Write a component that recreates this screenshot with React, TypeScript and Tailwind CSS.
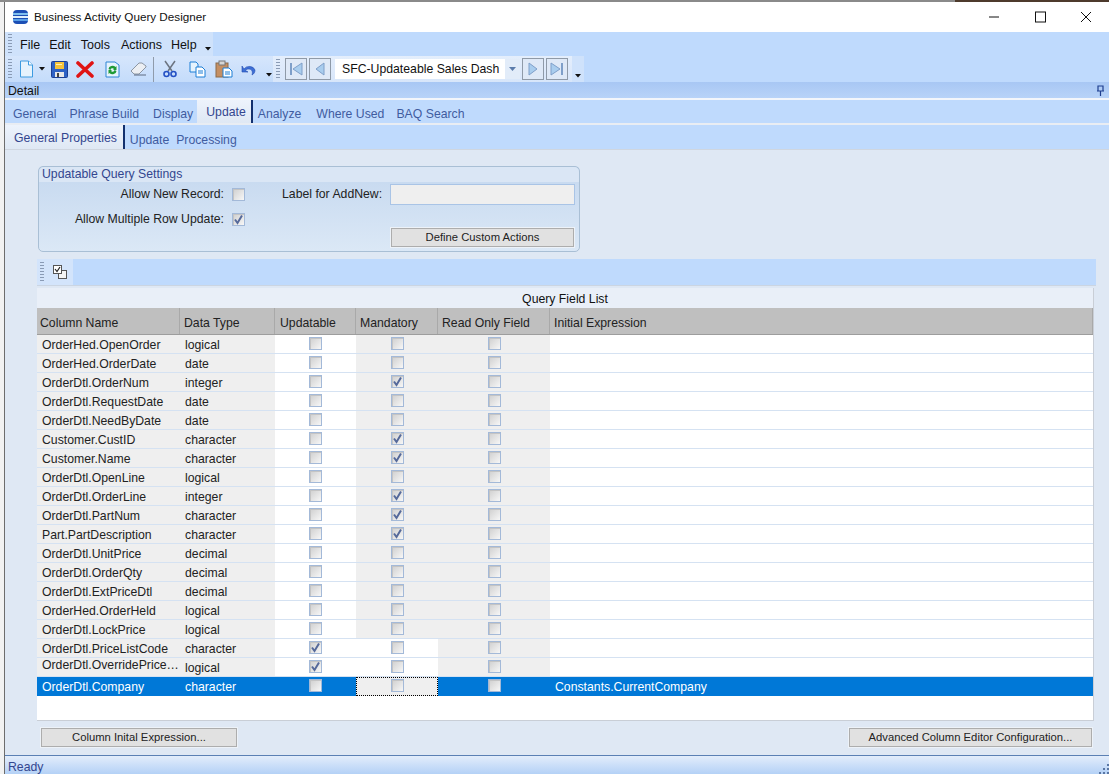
import React from "react";

const rows: [string, string, number, number][] = [
  ["OrderHed.OpenOrder", "logical", 0, 0],
  ["OrderHed.OrderDate", "date", 0, 0],
  ["OrderDtl.OrderNum", "integer", 0, 1],
  ["OrderDtl.RequestDate", "date", 0, 0],
  ["OrderDtl.NeedByDate", "date", 0, 0],
  ["Customer.CustID", "character", 0, 1],
  ["Customer.Name", "character", 0, 1],
  ["OrderDtl.OpenLine", "logical", 0, 0],
  ["OrderDtl.OrderLine", "integer", 0, 1],
  ["OrderDtl.PartNum", "character", 0, 1],
  ["Part.PartDescription", "character", 0, 1],
  ["OrderDtl.UnitPrice", "decimal", 0, 0],
  ["OrderDtl.OrderQty", "decimal", 0, 0],
  ["OrderDtl.ExtPriceDtl", "decimal", 0, 0],
  ["OrderHed.OrderHeld", "logical", 0, 0],
  ["OrderDtl.LockPrice", "logical", 0, 0],
  ["OrderDtl.PriceListCode", "character", 1, 0],
  ["OrderDtl.OverridePrice…", "logical", 1, 0],
];

const Check = ({ on }: { on?: boolean | number }) => (
  <span className="flex h-[13px] w-[13px] shrink-0 items-center justify-center border border-[#a3b9d8] bg-gradient-to-br from-[#cfcfcf] to-[#f7f7f7] shadow-[inset_1px_1px_0_#c4c4c4]">
    {on ? (
      <svg width="11" height="11" viewBox="0 0 11 11">
        <path d="M2 5.500l2.500 3.500L9 1.500" fill="none" stroke="#55699a" strokeWidth="2" />
      </svg>
    ) : null}
  </span>
);

const Grip = () => (
  <span className="mx-[3px] h-[20px] w-[4px] bg-[repeating-linear-gradient(to_bottom,#8a9bb5_0,#8a9bb5_1px,transparent_1px,transparent_3px)]" />
);

const Overflow = ({ className = "" }: { className?: string }) => (
  <svg width="6" height="4" viewBox="0 0 6 4" className={className}>
    <path d="M0 0h6L3 3.500z" fill="#111" />
  </svg>
);

const Logo = () => (
  <svg width="17" height="16" viewBox="0 0 17 16">
    <rect x="1" y="1" width="15" height="14" rx="4" fill="#1c4fb5" />
    <rect x="1" y="4" width="15" height="2" fill="#7fc0ee" />
    <rect x="1" y="7" width="15" height="2" fill="#dff0fb" />
    <rect x="1" y="10" width="15" height="2" fill="#5aa0e6" />
  </svg>
);

const NavBtn = ({ type }: { type: "first" | "prev" | "next" | "last" }) => (
  <button className="flex h-[22px] w-[22px] items-center justify-center border border-[#8f9aa8] bg-[#dfe9f7]">
    <svg width="16" height="14" viewBox="0 0 16 14">
      {type === "first" && (
        <>
          <rect x="2" y="1" width="2" height="12" fill="#7f9fc9" />
          <path d="M14 1v12L5 7z" fill="#a9cdee" stroke="#7f9fc9" />
        </>
      )}
      {type === "prev" && <path d="M12 1v12L4 7z" fill="#a9cdee" stroke="#7f9fc9" />}
      {type === "next" && <path d="M4 1v12l8-6z" fill="#a9cdee" stroke="#7f9fc9" />}
      {type === "last" && (
        <>
          <rect x="12" y="1" width="2" height="12" fill="#7f9fc9" />
          <path d="M2 1v12l9-6z" fill="#a9cdee" stroke="#7f9fc9" />
        </>
      )}
    </svg>
  </button>
);

const Tools = () => (
  <>
    <svg width="15" height="18" viewBox="0 0 15 18" className="ml-[4px]">
      <path d="M1.500 1h8l4 4v12h-12z" fill="#e6f3fd" stroke="#3d9be0" />
      <path d="M9.500 1v4h4" fill="#fff" stroke="#3d9be0" />
    </svg>
    <Overflow className="ml-[5px]" />
    <svg width="17" height="17" viewBox="0 0 17 17" className="ml-[6px]">
      <rect x="0.500" y="0.500" width="16" height="16" rx="1" fill="#2f62c4" stroke="#1c3f93" />
      <rect x="4" y="1" width="9" height="7" fill="#f5c33b" />
      <rect x="5" y="3" width="6" height="1" fill="#fff2b5" />
      <rect x="4" y="11" width="9" height="5" fill="#e8e8e8" />
      <rect x="6" y="12" width="2" height="4" fill="#444" />
    </svg>
    <svg width="18" height="17" viewBox="0 0 18 17" className="ml-[8px]">
      <path d="M2 2l14 13M16 2L2 15" stroke="#e01414" strokeWidth="3.600" strokeLinecap="round" />
    </svg>
    <svg width="15" height="17" viewBox="0 0 15 17" className="ml-[11px]">
      <path d="M1 1h9l4 3v12H1z" fill="#e6f3fd" stroke="#2f86d6" />
      <path d="M3.500 8a4 3.500 0 0 1 7-2l1-1v4H8l1-1a2 2 0 0 0-3.500 1zM11.500 10a4 3.500 0 0 1-7 2l-1 1V9H7l-1 1a2 2 0 0 0 3.500-1z" fill="#1f9a35" />
    </svg>
    <svg width="17" height="14" viewBox="0 0 17 14" className="ml-[10px]">
      <path d="M1 9l8-8h3l4 3v1l-7 7H4z" fill="#eceff3" stroke="#8c96a3" />
      <path d="M4 13h12" stroke="#5c6a80" />
    </svg>
    <span className="ml-[6px] h-[25px] w-px bg-[#8f9bab]" />
    <svg width="14" height="18" viewBox="0 0 14 18" className="ml-[9px]">
      <path d="M2 1l7 10M12 1L5 11" stroke="#6c7480" strokeWidth="1.500" />
      <circle cx="3.500" cy="14" r="2.500" fill="none" stroke="#2451c4" strokeWidth="1.600" />
      <circle cx="10.500" cy="14" r="2.500" fill="none" stroke="#2451c4" strokeWidth="1.600" />
    </svg>
    <svg width="17" height="17" viewBox="0 0 17 17" className="ml-[12px]">
      <path d="M1 1h6l2 2v8H1z" fill="#e6f3fd" stroke="#1d7fd6" />
      <path d="M7 6h6l3 3v7H7z" fill="#fff" stroke="#1d7fd6" />
      <path d="M9 10h5M9 12h5" stroke="#1d7fd6" />
    </svg>
    <svg width="18" height="18" viewBox="0 0 18 18" className="ml-[9px]">
      <rect x="1" y="3" width="12" height="14" fill="#c58f63" stroke="#8a6a4a" />
      <rect x="4" y="1" width="6" height="4" fill="#d6d6d6" stroke="#777" />
      <path d="M8 8h6l3 3v6H8z" fill="#fff" stroke="#1d7fd6" />
      <path d="M10 12h5M10 14h5" stroke="#1d7fd6" />
    </svg>
    <svg width="16" height="13" viewBox="0 0 16 13" className="ml-[8px]">
      <path d="M3 6a6 5 0 0 1 11 1c0 2-1 4-3 5 1-3 0-6-3-6-2 0-3 .5-3.500 1.500L7 9H1V3z" fill="#3d6fd6" stroke="#234bb0" strokeWidth="0.600" />
    </svg>
    <Overflow className="ml-[9px] mt-[12px]" />
  </>
);

const Btn = ({ text, className }: { text: string; className: string }) => (
  <button className={`flex h-[19px] items-center justify-center border border-[#adadad] bg-[#e1e1e1] text-[11.25px] text-[#222] outline outline-1 outline-[#edf2f8] ${className}`}>
    {text}
  </button>
);

const Row = ({ r }: { r: [string, string, number, number] }) => {
  const late = r[2] === 1;
  return (
    <div className="flex h-[19px] border-b border-[#d5e2f2] text-[#222]">
      <span className={`flex w-[143px] items-center bg-[#efefef] pl-[5px] ${r[0].endsWith("…") ? "pb-[4px]" : "pt-[2px]"}`}>{r[0]}</span>
      <span className="flex w-[95px] items-center bg-[#efefef] pl-[5px] pt-[2px]">{r[1]}</span>
      <span className="flex w-[81px] justify-center bg-white pt-[2px]"><Check on={r[2]} /></span>
      <span className={`flex w-[82px] justify-center pt-[2px] ${late ? "bg-white" : "bg-[#efefef]"}`}><Check on={r[3]} /></span>
      <span className="flex w-[112px] justify-center bg-[#efefef] pt-[2px]"><Check /></span>
      <span className="flex-1 bg-white" />
    </div>
  );
};

export default function App() {
  const head: [string, string][] = [
    ["Column Name", "w-[143px] pl-[3px]"],
    ["Data Type", "w-[95px] pl-[4px]"],
    ["Updatable", "w-[81px] pl-[5px]"],
    ["Mandatory", "w-[82px] pl-[4px]"],
    ["Read Only Field", "w-[112px] pl-[4px]"],
    ["Initial Expression", "flex-1 pl-[4px]"],
  ];
  return (
    <div className="flex h-[774px] w-[1109px] flex-col overflow-hidden bg-[#f2f2f2] font-['Liberation_Sans',sans-serif] text-[12.25px] text-[#222]">
      <div className="flex h-[2px] shrink-0">
        <div className="flex-1 bg-[#8a8a8a]" />
        <div className="w-[154px] bg-[#4d3a2c]" />
      </div>
      <div className="flex min-h-0 flex-1 pl-[4px]">
        <div className="flex min-w-0 flex-1 flex-col border-l border-[#6d6d6d]">
          {/* title bar */}
          <div className="flex h-[30px] shrink-0 items-center bg-white">
            <span className="ml-[7px]"><Logo /></span>
            <span className="ml-[5px] text-[11.7px] text-[#111]">Business Activity Query Designer</span>
            <div className="ml-auto flex items-center">
              <svg width="46" height="12" viewBox="0 0 46 12"><path d="M18 6h10" stroke="#111" /></svg>
              <svg width="46" height="12" viewBox="0 0 46 12"><rect x="18.500" y="1" width="10" height="10" fill="none" stroke="#111" /></svg>
              <svg width="46" height="12" viewBox="0 0 46 12"><path d="M18 1l10 10M28 1L18 11" stroke="#111" /></svg>
            </div>
          </div>
          {/* menu + toolbars */}
          <div className="h-[50px] shrink-0 bg-[#bfdafd]">
            <div className="flex h-[24px] w-[208px] items-center bg-[#cfe2fb]">
              <Grip />
              <nav className="flex pt-[3px] text-[12.5px] text-[#111]">
                <span className="ml-[5px]">File</span>
                <span className="ml-[9px]">Edit</span>
                <span className="ml-[10px]">Tools</span>
                <span className="ml-[11px]">Actions</span>
                <span className="ml-[9px]">Help</span>
              </nav>
              <Overflow className="ml-[8px] mt-[10px]" />
            </div>
            <div className="flex h-[26px] items-center">
              <div className="flex h-full w-[268px] items-center bg-gradient-to-b from-[#d6e6fc] to-[#c4dcfb]">
                <Grip />
                <Tools />
              </div>
              <div className="flex h-full w-[299px] items-center bg-gradient-to-b from-[#e4eefc] to-[#d8e6fa]">
                <Grip />
                <span className="ml-[2px] flex items-center gap-[2px]">
                  <NavBtn type="first" />
                  <NavBtn type="prev" />
                </span>
                <span className="ml-[4px] mr-[2px] flex h-[20px] w-[185px] items-center bg-white pl-[7px] text-[#111]">
                  SFC-Updateable Sales Dash
                  <span className="ml-auto flex h-full w-[15px] items-center justify-center bg-[#e2ecf9]">
                    <svg width="7" height="4" viewBox="0 0 7 4"><path d="M0 0h7L3.500 4z" fill="#5b7cab" /></svg>
                  </span>
                </span>
                <span className="flex items-center gap-[2px]">
                  <NavBtn type="next" />
                  <NavBtn type="last" />
                </span>
              </div>
              <div className="flex h-full w-[12px] items-end justify-center bg-[#cfe2fb] pb-[4px]">
                <Overflow />
              </div>
            </div>
          </div>
          {/* detail header */}
          <div className="flex h-[16px] shrink-0 items-center justify-between bg-gradient-to-b from-[#a8c7f4] to-[#b8d3f8] pl-[3px] pr-[4px] text-[#111]">
            <span className="pt-[2px]">Detail</span>
            <svg width="9" height="11" viewBox="0 0 9 11">
              <path d="M2 1h5v5H2zM1 6h7M4.500 6v5" fill="none" stroke="#1f3f8f" strokeWidth="1.200" />
            </svg>
          </div>
          <div className="h-[2px] shrink-0 bg-[#f3f6fb]" />
          {/* tabs */}
          <div className="flex h-[23px] shrink-0 items-center bg-[#bfdafd] text-[#3f5c9f]">
            <span className="ml-[8px] pt-[5px]">General</span>
            <span className="ml-[13px] pt-[5px]">Phrase Build</span>
            <span className="ml-[14px] pt-[5px]">Display</span>
            <span className="ml-[4px] h-full border-r-2 border-[#12306e] bg-gradient-to-b from-[#edf3fc] to-[#dfe8f4] pl-[9px] pr-[5px] pt-[3px] text-[#33468f]">Update</span>
            <span className="ml-[5px] pt-[5px]">Analyze</span>
            <span className="ml-[15px] pt-[5px]">Where Used</span>
            <span className="ml-[12px] pt-[5px]">BAQ Search</span>
          </div>
          <div className="h-[2px] shrink-0 bg-[#e9edf3]" />
          <div className="flex h-[25px] shrink-0 items-center border-b border-[#cfd6e0] bg-[#bfdafd] text-[#3f5c9f]">
            <span className="h-full border-r-2 border-[#12306e] bg-gradient-to-b from-[#edf3fc] to-[#dfe8f4] pl-[9px] pr-[6px] pt-[4px] text-[#33468f]">General Properties</span>
            <span className="ml-[5px] whitespace-pre pt-[6px]">Update  Processing</span>
          </div>
          {/* body */}
          <div className="flex min-h-0 flex-1 flex-col bg-[#dfe8f4] pl-[32px] pt-[16px]">
            <fieldset className="ml-px h-[86px] w-[542px] shrink-0 rounded-[5px] border border-[#a9bfd5] bg-gradient-to-b from-[#c5d8ef] to-[#dbe8f6]">
              <div className="h-[15px] rounded-t-[5px] bg-[#dae6f5] pl-[3px] leading-[14px] text-[#33468f]">Updatable Query Settings</div>
              <div className="flex pt-[2px]">
                <div className="flex w-[208px] flex-col items-end gap-[10px] pr-[2px] pt-[3px]">
                  <label className="flex h-[15px] items-center gap-[8px]">Allow New Record:<Check /></label>
                  <label className="flex h-[15px] items-center gap-[8px]">Allow Multiple Row Update:<Check on /></label>
                </div>
                <div className="ml-[35px] flex flex-col">
                  <div className="flex items-center gap-[8px]">
                    <span>Label for AddNew:</span>
                    <span className="h-[21px] w-[185px] border border-[#a9c4e6] bg-[#efefef]" />
                  </div>
                  <Btn text="Define Custom Actions" className="ml-[109px] mt-[23px] w-[183px]" />
                </div>
              </div>
            </fieldset>
            <div className="mt-[7px] flex h-[27px] w-[1059px] shrink-0 border-b border-[#cbd5e2] bg-[#bfdafd]">
              <div className="flex w-[36px] items-center bg-[#d3e4fb]">
                <Grip />
                <svg width="14" height="15" viewBox="0 0 14 15" className="ml-[6px]">
                  <rect x="5.500" y="5.500" width="8" height="8" fill="#f4f4f4" stroke="#555" />
                  <rect x="0.500" y="0.500" width="8" height="8" fill="#fff" stroke="#555" />
                  <path d="M2 4l2 2.500L7 2" fill="none" stroke="#222" strokeWidth="1.200" />
                </svg>
              </div>
            </div>
            <div className="mt-[2px] flex h-[433px] w-[1057px] shrink-0 flex-col border-b border-r border-[#c9ced6]">
              <div className="flex h-[20px] shrink-0 items-center justify-center bg-[#e9eff8] pt-[2px] text-[#111]">Query Field List</div>
              <div className="flex h-[27px] shrink-0 border-b border-[#9d9d9d] bg-[#bfbfbf]">
                {head.map(([t, c]) => (
                  <span key={t} className={`flex items-center border-r border-[#a9a9a9] pt-[4px] text-[#222] ${c}`}>{t}</span>
                ))}
              </div>
              <div className="flex-1 bg-white">
                {rows.map((r) => <Row key={r[0]} r={r} />)}
                <div className="flex h-[19px] bg-[#0078d7] text-white">
                  <span className="flex w-[143px] items-center pl-[5px] pt-[2px]">OrderDtl.Company</span>
                  <span className="flex w-[95px] items-center pl-[5px] pt-[2px]">character</span>
                  <span className="flex w-[81px] justify-center pt-[2px]"><Check /></span>
                  <span className="flex w-[82px] justify-center border border-dotted border-black bg-[#efefef] pt-px"><Check /></span>
                  <span className="flex w-[112px] justify-center pt-[2px]"><Check /></span>
                  <span className="flex flex-1 items-center pl-[5px] pt-[2px]">Constants.CurrentCompany</span>
                </div>
              </div>
            </div>
            <div className="mt-[7px] flex w-[1060px] justify-between pl-[4px] pr-[5px]">
              <Btn text="Column Inital Expression..." className="w-[196px]" />
              <Btn text="Advanced Column Editor Configuration..." className="w-[243px]" />
            </div>
          </div>
          {/* status */}
          <div className="relative flex h-[19px] shrink-0 items-center border-t border-[#5b80b4] bg-gradient-to-b from-[#e3edfb] to-[#b4d1f6] pl-[3px] pt-[4px] text-[#33468f]">
            Ready
            <svg width="12" height="12" viewBox="0 0 12 12" className="absolute bottom-0 right-0">
              <path d="M10 2h2v2h-2zM6 6h2v2H6zM10 6h2v2h-2zM2 10h2v2H2zM6 10h2v2H6zM10 10h2v2h-2z" fill="#5a77a5" />
            </svg>
          </div>
        </div>
      </div>
    </div>
  );
}
